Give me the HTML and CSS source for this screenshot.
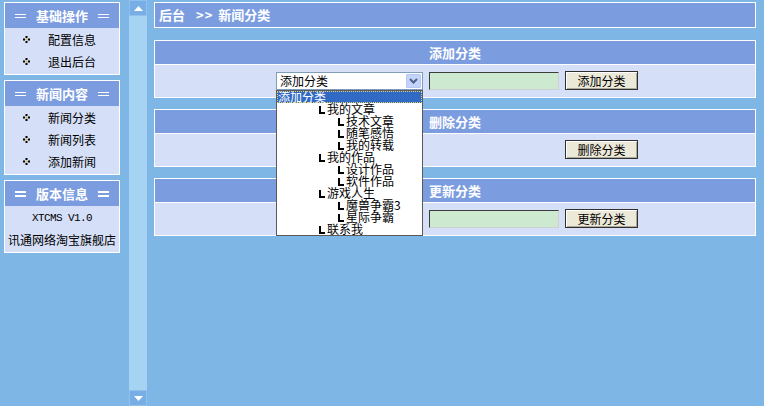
FILE: index.html
```html
<!DOCTYPE html>
<html lang="zh-CN">
<head>
<meta charset="utf-8">
<title>新闻分类</title>
<link rel="stylesheet" href="styles.css">
</head>
<body>
<div class="page">
  <aside class="sidebar">
    <div class="panel">
      <div class="panel-head"><span class="bars"></span>基础操作<span class="bars"></span></div>
      <ul class="menu">
        <li><i class="dot"><svg width="7" height="7" viewBox="0 0 7 7"><rect x="2.5" y="0" width="2" height="2" fill="#000"/><rect x="0" y="2.5" width="2" height="2" fill="#000"/><rect x="5" y="2.5" width="2" height="2" fill="#000"/><rect x="2.5" y="5" width="2" height="2" fill="#000"/><rect x="2.5" y="2.5" width="2" height="2" fill="#c8b850"/></svg></i>配置信息</li>
        <li><i class="dot"><svg width="7" height="7" viewBox="0 0 7 7"><rect x="2.5" y="0" width="2" height="2" fill="#000"/><rect x="0" y="2.5" width="2" height="2" fill="#000"/><rect x="5" y="2.5" width="2" height="2" fill="#000"/><rect x="2.5" y="5" width="2" height="2" fill="#000"/><rect x="2.5" y="2.5" width="2" height="2" fill="#c8b850"/></svg></i>退出后台</li>
      </ul>
    </div>
    <div class="panel">
      <div class="panel-head"><span class="bars"></span>新闻内容<span class="bars"></span></div>
      <ul class="menu">
        <li><i class="dot"><svg width="7" height="7" viewBox="0 0 7 7"><rect x="2.5" y="0" width="2" height="2" fill="#000"/><rect x="0" y="2.5" width="2" height="2" fill="#000"/><rect x="5" y="2.5" width="2" height="2" fill="#000"/><rect x="2.5" y="5" width="2" height="2" fill="#000"/><rect x="2.5" y="2.5" width="2" height="2" fill="#c8b850"/></svg></i>新闻分类</li>
        <li><i class="dot"><svg width="7" height="7" viewBox="0 0 7 7"><rect x="2.5" y="0" width="2" height="2" fill="#000"/><rect x="0" y="2.5" width="2" height="2" fill="#000"/><rect x="5" y="2.5" width="2" height="2" fill="#000"/><rect x="2.5" y="5" width="2" height="2" fill="#000"/><rect x="2.5" y="2.5" width="2" height="2" fill="#c8b850"/></svg></i>新闻列表</li>
        <li><i class="dot"><svg width="7" height="7" viewBox="0 0 7 7"><rect x="2.5" y="0" width="2" height="2" fill="#000"/><rect x="0" y="2.5" width="2" height="2" fill="#000"/><rect x="5" y="2.5" width="2" height="2" fill="#000"/><rect x="2.5" y="5" width="2" height="2" fill="#000"/><rect x="2.5" y="2.5" width="2" height="2" fill="#c8b850"/></svg></i>添加新闻</li>
      </ul>
    </div>
    <div class="panel">
      <div class="panel-head"><span class="bars thick"></span>版本信息<span class="bars thick"></span></div>
      <div class="info">
        <div class="ver">XTCMS V1.0</div>
        <div class="shop">讯通网络淘宝旗舰店</div>
      </div>
    </div>
  </aside>

  <div class="scrollbar">
    <div class="sb-btn"><svg width="9" height="5" viewBox="0 0 9 5"><path d="M4.5 0 L9 5 L0 5 Z" fill="#fff"/></svg></div>
    <div class="sb-track"></div>
    <div class="sb-btn"><svg width="9" height="5" viewBox="0 0 9 5"><path d="M0 0 L9 0 L4.5 5 Z" fill="#fff"/></svg></div>
  </div>

  <main class="main">
    <div class="crumb">后台<span class="sep">&gt;&gt;</span>新闻分类</div>

    <section class="box">
      <div class="box-head">添加分类</div>
      <div class="box-body">
        <div class="row">
          <div class="select open">
            <span class="sel-text">添加分类</span>
            <span class="sel-arrow"><svg width="9" height="6" viewBox="0 0 9 6"><path d="M1 1 L4.5 4.5 L8 1" fill="none" stroke="#4d6185" stroke-width="2"/></svg></span>
            <ul class="listbox">
              <li class="chosen">添加分类</li>
              <li class="lv1"><i class="tree"></i>我的文章</li>
              <li class="lv2"><i class="tree"></i>技术文章</li>
              <li class="lv2"><i class="tree"></i>随笔感悟</li>
              <li class="lv2"><i class="tree"></i>我的转载</li>
              <li class="lv1"><i class="tree"></i>我的作品</li>
              <li class="lv2"><i class="tree"></i>设计作品</li>
              <li class="lv2"><i class="tree"></i>软件作品</li>
              <li class="lv1"><i class="tree"></i>游戏人生</li>
              <li class="lv2"><i class="tree"></i>魔兽争霸3</li>
              <li class="lv2"><i class="tree"></i>星际争霸</li>
              <li class="lv1"><i class="tree"></i>联系我</li>
            </ul>
          </div>
          <div class="txt"></div>
          <div class="btn">添加分类</div>
        </div>
      </div>
    </section>

    <section class="box">
      <div class="box-head">删除分类</div>
      <div class="box-body">
        <div class="row">
          <div class="select"><span class="sel-text">添加分类</span></div>
          <div class="empty"></div>
          <div class="btn">删除分类</div>
        </div>
      </div>
    </section>

    <section class="box">
      <div class="box-head">更新分类</div>
      <div class="box-body">
        <div class="row">
          <div class="select"><span class="sel-text">添加分类</span></div>
          <div class="txt"></div>
          <div class="btn">更新分类</div>
        </div>
      </div>
    </section>
  </main>
</div>
</body>
</html>
```

FILE: styles.css
```css
* { box-sizing: border-box; }
html, body { margin: 0; padding: 0; }
body {
  background: #7eb6e6;
  font-family: "Noto Sans CJK SC", "Noto Sans", sans-serif;
  font-size: 12px;
  color: #000;
  width: 764px;
  height: 406px;
  overflow: hidden;
}
.page { display: flex; height: 406px; }

/* sidebar */
.sidebar {
  width: 116px;
  margin: 2px 0 0 4px;
  display: flex;
  flex-direction: column;
  gap: 5px;
}
.panel { border: 1px solid #fff; background: #d5dff7; }
.panel-head {
  height: 25px;
  background: #7b9de0;
  color: #fff;
  font-weight: bold;
  font-size: 13px;
  line-height: 25px;
  display: flex;
  align-items: center;
  justify-content: center;
  gap: 10px;
}
.bars { width: 11px; height: 4px; border-top: 1px solid #fff; border-bottom: 1px solid #fff; }
.bars.thick { width: 11px; height: 6px; border-top-width: 2px; border-bottom-width: 2px; }
.menu { list-style: none; margin: 0; padding: 0 0 2px; }
.menu li { height: 22px; display: flex; align-items: center; padding-left: 18px; }
.dot { display: block; width: 7px; height: 7px; margin-right: 18px; }
.dot svg { display: block; }
.info { padding: 2px 0 2px; text-align: center; }
.ver { font-family: "Liberation Mono", monospace; font-size: 11px; letter-spacing: -0.6px; height: 21px; line-height: 21px; }
.shop { height: 21px; line-height: 21px; white-space: nowrap; }

/* scrollbar */
.scrollbar {
  width: 18px;
  margin-left: 9px;
  display: flex;
  flex-direction: column;
  height: 406px;
}
.sb-btn {
  height: 16px;
  background: #78ade5;
  border: 1px solid #8fc0ee;
  display: flex;
  align-items: center;
  justify-content: center;
}
.sb-btn svg { display: block; }
.sb-track { flex: 1; background: #a7d3f2; }

/* main */
.main { width: 602px; margin-left: 7px; padding-top: 2px; }
.crumb {
  height: 26px;
  border: 1px solid #fff;
  background: #7b9de0;
  color: #fff;
  font-weight: bold;
  font-size: 13px;
  line-height: 23px;
  padding-left: 4px;
}
.sep { margin: 0 5px 0 11px; letter-spacing: 1px; }

.box { border: 1px solid #fff; margin-top: 12px; }
.box + .box { margin-top: 11px; }
.box-head {
  height: 24px;
  background: #7b9de0;
  border-bottom: 1px solid #fff;
  color: #fff;
  font-weight: bold;
  font-size: 13px;
  line-height: 23px;
  text-align: center;
}
.box-body { background: #d5dff7; padding: 6px 0 7px 4px; }
.row {
  display: grid;
  grid-template-columns: 147px 130px 73px;
  column-gap: 6px;
  justify-content: center;
  align-items: center;
  height: 19px;
}

.select {
  position: relative;
  height: 18px;
  background: #fff;
  border: 1px solid #7f9db9;
  padding-left: 3px;
  line-height: 16px;
}
.sel-arrow {
  position: absolute;
  right: 1px;
  top: 1px;
  width: 15px;
  height: 14px;
  background: #c3d3fd;
  border: 1px solid #b5c8f2;
  border-radius: 1px;
  display: flex;
  align-items: center;
  justify-content: center;
}
.sel-arrow svg { display: block; }
.listbox {
  position: absolute;
  z-index: 5;
  left: -1px;
  top: 17px;
  width: 147px;
  margin: 0;
  padding: 0;
  list-style: none;
  background: #fff;
  border: 1px solid #5a5a5a;
  line-height: 12px;
}
.listbox li { height: 12px; white-space: nowrap; display: flex; align-items: center; }
.listbox li.chosen {
  background: #316ac5;
  color: #fff;
  padding-left: 1px;
  outline: 1px dotted #e8d070;
  outline-offset: -1px;
}
.listbox li.lv1 { padding-left: 42px; }
.listbox li.lv2 { padding-left: 61px; }
.tree {
  display: block;
  width: 6px;
  height: 8px;
  margin: 2px 2px 0 0;
  border-left: 2px solid #000;
  border-bottom: 2px solid #000;
}

.txt {
  height: 18px;
  background: #cde9cf;
  border: 1px solid;
  border-color: #3c3c3c #cfcfcf #cfcfcf #3c3c3c;
}
.btn {
  height: 19px;
  background: #ece9d8;
  border: 1px solid #303030;
  box-shadow: inset 1px 1px #fff, inset -1px -1px #aca899;
  text-align: center;
  line-height: 17px;
}
.empty { height: 18px; }
```
